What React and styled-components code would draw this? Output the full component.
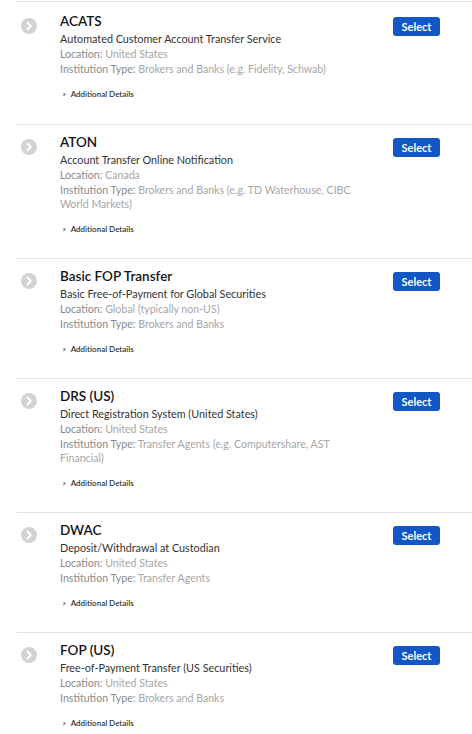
import React from 'react'
import styled, { createGlobalStyle } from 'styled-components'

const methods = [
  {
    name: 'ACATS',
    desc: 'Automated Customer Account Transfer Service',
    location: 'United States',
    type: 'Brokers and Banks (e.g. Fidelity, Schwab)'
  },
  {
    name: 'ATON',
    desc: 'Account Transfer Online Notification',
    location: 'Canada',
    type: 'Brokers and Banks (e.g. TD Waterhouse, CIBC World Markets)'
  },
  {
    name: 'Basic FOP Transfer',
    desc: 'Basic Free-of-Payment for Global Securities',
    location: 'Global (typically non-US)',
    type: 'Brokers and Banks'
  },
  {
    name: 'DRS (US)',
    desc: 'Direct Registration System (United States)',
    location: 'United States',
    type: 'Transfer Agents (e.g. Computershare, AST Financial)'
  },
  {
    name: 'DWAC',
    desc: 'Deposit/Withdrawal at Custodian',
    location: 'United States',
    type: 'Transfer Agents'
  },
  {
    name: 'FOP (US)',
    desc: 'Free-of-Payment Transfer (US Securities)',
    location: 'United States',
    type: 'Brokers and Banks'
  }
]

const Global = createGlobalStyle`
  body {
    margin: 0;
    background: #fff;
    font-family: Lato, 'Open Sans', Arial, sans-serif;
  }
`

const ArrowIcon = () => (
  <svg width="16" height="16" viewBox="0 0 16 16">
    <circle cx="8" cy="8" r="8" fill="#d3d3d3" />
    <path d="M6.6 4.8 L9.8 8 L6.6 11.2" fill="none" stroke="#fff" strokeWidth="2" strokeLinecap="round" strokeLinejoin="round" />
  </svg>
)

export default () => {
  return (
    <Wrap>
      <Global />
      {methods.map((m, i) => (
        <Row key={i}>
          <IconCell>
            <ArrowIcon />
          </IconCell>
          <Body>
            <Title>{m.name}</Title>
            <Desc>{m.desc}</Desc>
            <Info>
              <Label>Location:</Label> {m.location}
            </Info>
            <Info>
              <Label>Institution Type:</Label> {m.type}
            </Info>
            <More>
              <Chevron>&gt;</Chevron>Additional Details
            </More>
          </Body>
          <SelectButton>Select</SelectButton>
        </Row>
      ))}
    </Wrap>
  )
}

const Wrap = styled.div`
  padding-top: 1px;
`

const Row = styled.div`
  display: flex;
  align-items: flex-start;
  margin-left: 17px;
  border-top: 1px solid #e3e3e3;
  padding: 8px 32px 23px 0;
  &:first-of-type {
    padding-top: 10px;
    padding-bottom: 24px;
  }
`

const IconCell = styled.div`
  width: 16px;
  height: 16px;
  margin: 6px 0 0 4px;
  flex-shrink: 0;
  svg {
    display: block;
  }
`

const Body = styled.div`
  flex: 1;
  margin-left: 23px;
  max-width: 310px;
`

const Title = styled.div`
  font-size: 13.5px;
  font-weight: 600;
  color: #141414;
  line-height: 18px;
`

const Desc = styled.div`
  font-size: 10.8px;
  color: #333;
  line-height: 15px;
  margin-top: 1px;
`

const Info = styled.div`
  font-size: 10.6px;
  color: #a6a6a6;
  line-height: 14px;
  margin-top: 1px;
`

const Label = styled.span`
  color: #8a8a8a;
`

const More = styled.div`
  margin-top: 12px;
  margin-left: 2px;
  font-size: 8px;
  line-height: 12px;
  color: #333;
  font-weight: 600;
`

const Chevron = styled.span`
  display: inline-block;
  margin-right: 4px;
  font-size: 8px;
  transform: scaleX(0.8);
`

const SelectButton = styled.button`
  margin-left: auto;
  margin-top: 5px;
  width: 47px;
  height: 19px;
  padding: 0;
  border: none;
  border-radius: 3px;
  background: #1157c5;
  color: #fff;
  font-family: Lato, 'Open Sans', Arial, sans-serif;
  font-size: 11px;
  font-weight: 700;
  cursor: pointer;
  flex-shrink: 0;
`
